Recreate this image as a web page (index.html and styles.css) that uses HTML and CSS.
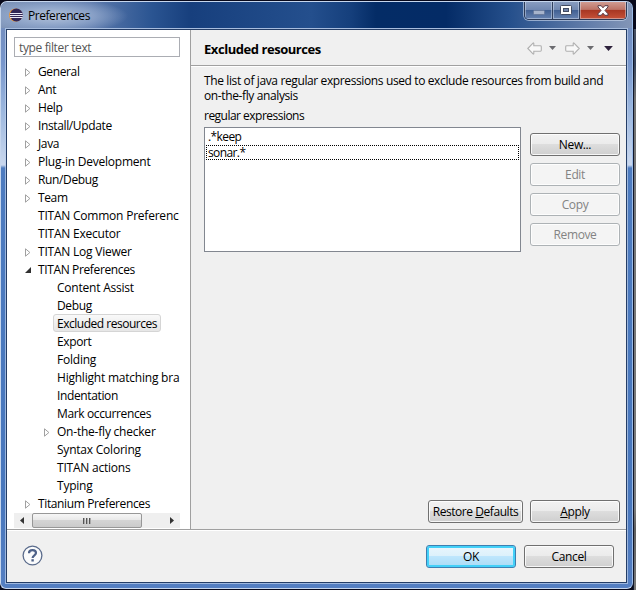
FILE: index.html
```html
<!DOCTYPE html>
<html lang="en">
<head>
<meta charset="utf-8">
<title>Preferences</title>
<link rel="stylesheet" href="styles.css">
</head>
<body>
<svg class="defs" width="0" height="0">
  <symbol id="closed" viewBox="0 0 6 9"><path d="M.5 .8v7.4l4.4-3.7z" fill="#fff" stroke="#a0a0a0"/></symbol>
  <symbol id="open" viewBox="0 0 6 6"><path d="M6 0v6H0z" fill="#303030"/></symbol>
  <symbol id="down" viewBox="0 0 7 4"><path d="M0 0h7L3.5 4z" fill="currentColor"/></symbol>
  <symbol id="arrow" viewBox="0 0 15 13"><path d="M.8 6.5 6 1.2q.8-.8.8.4v2.2h6.600q.9 0 .9.9v3.600q0 .9-.9.9H6.800v2.200q0 1.200-.8.4z" fill="#f8f8f8" stroke="#b0b0b0" stroke-width="1.1"/></symbol>
</svg>
<div class="desktop">
<div class="window">
  <header class="titlebar">
    <svg class="logo" width="14" height="14" viewBox="0 0 14 14"><circle cx="6.6" cy="7" r="6.6" fill="#ef942f"/><circle cx="7.4" cy="7" r="6.4" fill="#312554"/><path d="M1 5.500h12.500M.9 7.500h13M1 9.500h12.500" stroke="#e9e7f4"/></svg>
    <span class="caption">Preferences</span>
    <div class="controls">
      <div class="ctl min"><svg width="12" height="5"><rect x=".5" y=".5" width="11" height="4" rx="1" fill="#a7b4cc" stroke="#697b9d"/></svg></div>
      <div class="ctl max"><svg width="12" height="10"><rect x=".5" y=".5" width="11" height="9" rx="1" fill="#fff" stroke="#434c62"/><rect x="3.5" y="3.5" width="5" height="3" fill="#7084ab" stroke="#434c62"/></svg></div>
      <div class="ctl close"><svg width="12" height="11" viewBox="0 0 12 11"><path d="M1 .7h3.200L6 2.800 7.800.7H11v1.200L8 5.500l3 3.300v1.500H7.800L6 8.200l-1.800 2.100H1V8.800l3-3.300-3-3.600z" fill="#fff" stroke="#593b46"/></svg></div>
    </div>
  </header>
  <div class="client">
    <div class="panes">
      <nav class="side">
        <div class="filter">type filter text</div>
        <div class="tree">
          <div class="row"><svg class="tw"><use href="#closed"/></svg><span>General</span></div>
          <div class="row"><svg class="tw"><use href="#closed"/></svg><span>Ant</span></div>
          <div class="row"><svg class="tw"><use href="#closed"/></svg><span>Help</span></div>
          <div class="row"><svg class="tw"><use href="#closed"/></svg><span>Install/Update</span></div>
          <div class="row"><svg class="tw"><use href="#closed"/></svg><span>Java</span></div>
          <div class="row loose"><svg class="tw"><use href="#closed"/></svg><span>Plug-in Development</span></div>
          <div class="row"><svg class="tw"><use href="#closed"/></svg><span>Run/Debug</span></div>
          <div class="row"><svg class="tw"><use href="#closed"/></svg><span>Team</span></div>
          <div class="row loose"><i class="tw"></i><span>TITAN Common Preferenc</span></div>
          <div class="row loose"><i class="tw"></i><span>TITAN Executor</span></div>
          <div class="row loose"><svg class="tw"><use href="#closed"/></svg><span>TITAN Log Viewer</span></div>
          <div class="row"><svg class="tw tw-open"><use href="#open"/></svg><span>TITAN Preferences</span></div>
          <div class="row sub loose"><i class="tw"></i><span>Content Assist</span></div>
          <div class="row sub"><i class="tw"></i><span>Debug</span></div>
          <div class="row sub"><i class="tw"></i><span class="selected">Excluded resources</span></div>
          <div class="row sub"><i class="tw"></i><span>Export</span></div>
          <div class="row sub loose"><i class="tw"></i><span>Folding</span></div>
          <div class="row sub loose"><i class="tw"></i><span>Highlight matching bra</span></div>
          <div class="row sub"><i class="tw"></i><span>Indentation</span></div>
          <div class="row sub"><i class="tw"></i><span>Mark occurrences</span></div>
          <div class="row sub loose"><svg class="tw"><use href="#closed"/></svg><span>On-the-fly checker</span></div>
          <div class="row sub loose"><i class="tw"></i><span>Syntax Coloring</span></div>
          <div class="row sub loose"><i class="tw"></i><span>TITAN actions</span></div>
          <div class="row sub loose"><i class="tw"></i><span>Typing</span></div>
          <div class="row"><svg class="tw"><use href="#closed"/></svg><span>Titanium Preferences</span></div>
        </div>
        <div class="scroll">
          <svg width="18" height="15"><path d="M10 4v7L6 7.500z" fill="#333"/></svg>
          <div class="thumb"><i></i><i></i><i></i></div>
          <svg width="18" height="15"><path d="M8 4v7l4-3.500z" fill="#333"/></svg>
        </div>
      </nav>
      <main class="page">
        <div class="pagehead">
          <h1>Excluded resources</h1>
          <div class="history">
            <svg width="15" height="13"><use href="#arrow"/></svg>
            <svg class="dd" width="7" height="4"><use href="#down"/></svg>
            <svg class="fwd" width="15" height="13"><use href="#arrow"/></svg>
            <svg class="dd" width="7" height="4"><use href="#down"/></svg>
            <svg class="menu" width="9" height="5"><use href="#down"/></svg>
          </div>
        </div>
        <div class="body">
          <p class="desc">The list of java regular expressions used to exclude resources from build and</p>
          <p class="desc">on-the-fly analysis</p>
          <p class="label">regular expressions</p>
          <div class="editor">
            <div class="list">
              <div class="item">.*keep</div>
              <div class="item focus">sonar.*</div>
            </div>
            <div class="actions">
              <div class="btn">New...</div>
              <div class="btn off">Edit</div>
              <div class="btn off">Copy</div>
              <div class="btn off">Remove</div>
            </div>
          </div>
          <div class="apply">
            <div class="btn wide">Restore&nbsp;<u>D</u>efaults</div>
            <div class="btn"><u>A</u>pply</div>
          </div>
        </div>
      </main>
    </div>
    <footer class="foot">
      <div class="help"><svg width="21" height="21" viewBox="0 0 21 21"><circle cx="10.500" cy="10.500" r="9.400" fill="#fafbfc" stroke="#5b6c8c" stroke-width="1.300"/><path d="M7 8.300Q7 5.200 10.500 5.200T14 8.100c0 2.300-3.400 2.300-3.400 5" fill="none" stroke="#4d6188" stroke-width="2.200"/><rect x="9.400" y="14.200" width="2.400" height="2.300" fill="#4d6188"/></svg></div>
      <div class="btn ok">OK</div>
      <div class="btn">Cancel</div>
    </footer>
  </div>
</div>
<div class="behind"></div>
</div>
</body>
</html>
```

FILE: styles.css
```css
* { box-sizing: border-box; }
body {
  margin: 0;
  width: 636px;
  height: 590px;
  overflow: hidden;
  font: 12px/15px "Open Sans", "Noto Sans", sans-serif;
  letter-spacing: -0.37px;
  color: #000;
}
svg { display: block; flex: none; }
.defs { position: absolute; }
.desktop {
  display: flex;
  height: 590px;
  padding-top: 1px;
  background: #08091b;
}
.window {
  width: 633px;
  height: 588px;
  border: 1px solid #c6d6ed;
  border-right-color: #9cbce8;
  border-radius: 7px 7px 6px 6px;
  background: linear-gradient(#7189b6 0, #7796cc 60px, #9db8df 110px, #cad8ee 163px, #4e7cc0 166px, #4877bd 500px, #557fc2 100%);
  overflow: hidden;
}
.behind {
  flex: 1;
  margin-top: 28px;
  background: linear-gradient(#485061 0, #37435a 35px, #737373 70px, #7b7b7b 480px, #606060 500px, #777 100%);
  border-left: 1px solid #10172c;
}
.titlebar {
  height: 26px;
  display: flex;
  align-items: flex-start;
  padding-left: 8px;
  background:
    radial-gradient(ellipse 75px 18px at 52px 14px, #b3c3db 0, rgba(150,172,207,.75) 55%, transparent 100%),
    linear-gradient(90deg, #7d92b6 0, #5d7aac 90px, #2b5592 150px, #173f7d 190px, #244f8d 310px, #153f7c 350px, #042c66 375px, #042b66 445px, #26508c 510px, #657fab 590px, #8194b6 628px);
}
.logo { margin-top: 6px; }
.caption { margin: 6px 0 0 5px; letter-spacing: -0.45px; }
.controls {
  display: flex;
  margin: -1px 5px 0 auto;
  height: 19px;
  border: 1px solid #2b3a57;
  border-top: 0;
  border-radius: 0 0 5px 5px;
  box-shadow: 0 0 0 1px rgba(200,214,235,.65);
  overflow: hidden;
}
.ctl {
  display: flex;
  align-items: center;
  justify-content: center;
  box-shadow: inset 0 0 0 1px rgba(225,233,247,.45);
}
.min, .max {
  border-right: 1px solid #30405f;
  background: linear-gradient(#8b9fc2 0, #7188b1 48%, #405f92 50%, #6682b0 100%);
}
.min { width: 28px; padding-top: 4px; }
.max { width: 27px; }
.close { width: 46px; background: linear-gradient(#d3a197 0, #bd7366 47%, #a73622 50%, #c65239 100%); }
.client {
  display: flex;
  flex-direction: column;
  margin: 1px 5px 0;
  height: 554px;
  border: 1px solid #243d66;
  outline: 1px solid rgba(190,208,235,.7);
  background: #f0f0f0;
}
.panes { display: flex; height: 500px; border-bottom: 1px solid #a0a0a0; }
.side {
  width: 184px;
  padding: 7px 10px 0 7px;
  border-right: 1px solid #a0a0a0;
  background: #fff;
}
.filter {
  height: 20px;
  border: 1px solid #abadb3;
  padding: 2px 4px;
  color: #555;
}
.tree { height: 456px; padding-top: 5px; overflow: hidden; }
.row { display: flex; align-items: center; height: 18px; white-space: nowrap; }
.row span { flex: none; }
.loose { letter-spacing: -0.22px; }
.tw { width: 6px; height: 9px; flex: none; margin: 2px 7px 0 11px; }
.tw-open { height: 6px; }
.sub { padding-left: 19px; }
.selected {
  height: 18px;
  margin-left: -4px;
  padding: 1px 3px 0;
  border: 1px solid #d5d5d5;
  border-radius: 3px;
  background: linear-gradient(#f9f9f9, #e6e6e6);
  letter-spacing: -0.48px;
}
.scroll { display: flex; height: 15px; background: #efefef; }
.thumb {
  width: 110px;
  margin-right: 20px;
  border: 1px solid #979797;
  border-radius: 2px;
  background: linear-gradient(#f6f6f6 0, #e8e8e8 47%, #d4d4d4 50%, #cbcbcb 100%);
  display: flex;
  justify-content: center;
  align-items: center;
  gap: 1px;
}
.thumb i { width: 2px; height: 6px; border-left: 1px solid #555; border-right: 1px solid #aaa; }
.scroll svg { flex: 1; }
.page { flex: 1; display: flex; flex-direction: column; }
.pagehead {
  display: flex;
  align-items: center;
  height: 36px;
  border-bottom: 1px solid #a0a0a0;
  box-shadow: 0 1px #fff;
  padding: 0 13px;
}
h1 { margin: 2px 0 0; font-size: 13px; line-height: 18px; font-weight: 700; letter-spacing: -0.45px; }
.history { display: flex; align-items: center; margin: 1px 0 0 auto; }
.dd { margin: 0 9px 0 7px; color: #6b6b6f; }
.dd + .menu { margin-left: 1px; }
.fwd { transform: scaleX(-1); }
.menu { color: #2d213b; }
.body { flex: 1; display: flex; flex-direction: column; padding: 7px 6px 6px 13px; }
p { margin: 0; white-space: nowrap; }
.desc { letter-spacing: -0.38px; }
.label { margin-top: 5px; letter-spacing: -0.52px; }
.editor { display: flex; gap: 9px; margin-top: 4px; }
.list {
  width: 317px;
  height: 125px;
  padding: 1px 1px;
  border: 1px solid #828790;
  background: #fff;
  letter-spacing: -0.6px;
}
.item { height: 16px; padding: 0 2px; line-height: 16px; }
.focus { border: 1px dotted #000; padding: 0 1px; line-height: 13px; height: 15px; }
.actions { display: flex; flex-direction: column; gap: 7px; padding-top: 6px; }
.btn {
  width: 90px;
  height: 23px;
  display: flex;
  align-items: center;
  justify-content: center;
  border: 1px solid #707070;
  border-radius: 3px;
  background: linear-gradient(#f2f2f2 0, #ebebeb 48%, #dddddd 50%, #cfcfcf 100%);
  box-shadow: inset 0 0 0 1px rgba(255,255,255,.8);
}
.off { border-color: #adb2b5; background: #f4f4f4; color: #838383; }
.wide { width: 95px; letter-spacing: -0.45px; }
.apply { display: flex; gap: 7px; margin: auto 0 0 224px; }
.foot {
  flex: 1;
  display: flex;
  align-items: center;
  gap: 8px;
  padding: 0 12px 1px 15px;
  border-top: 1px solid #fff;
}
.help { margin: 0 auto 2px 0; }
.ok {
  border-color: #3c7fb1;
  background: linear-gradient(#eaf6fd 0, #dcf1fb 48%, #bee6fd 50%, #a9dbf5 100%);
  box-shadow: inset 0 0 0 2px #43d0f8;
}
```
